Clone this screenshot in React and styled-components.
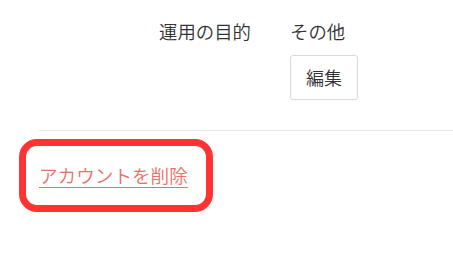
import React from "react";
import styled, { createGlobalStyle } from "styled-components";

const GlobalStyle = createGlobalStyle`
  body {
    margin: 0;
    background: #ffffff;
    font-family: "Noto Sans CJK JP", "Noto Sans", sans-serif;
    font-weight: 350;
    color: #333333;
  }
`;

export default function App() {
  return (
    <>
      <GlobalStyle />
      <Page>
        <InfoRow>
          <Label>運用の目的</Label>
          <Value>
            <span>その他</span>
            <EditButton type="button">編集</EditButton>
          </Value>
        </InfoRow>
        <Divider />
        <DangerZone>
          <Highlighted>
            <DeleteLink href="#">アカウントを削除</DeleteLink>
            <Annotation />
          </Highlighted>
        </DangerZone>
      </Page>
    </>
  );
}

const Page = styled.div`
  width: 453px;
  height: 255px;
  padding: 18px 0 0 39px;
  box-sizing: border-box;
  overflow: hidden;
`;

const InfoRow = styled.div`
  display: grid;
  grid-template-columns: 212px auto;
  column-gap: 39px;
  font-size: 18.4px;
  line-height: 27px;
`;

const Label = styled.div`
  text-align: right;
  color: #333333;
`;

const Value = styled.div`
  display: flex;
  flex-direction: column;
  align-items: flex-start;
  gap: 10px;
`;

const EditButton = styled.button`
  font-family: inherit;
  font-weight: 350;
  font-size: 18px;
  line-height: 27px;
  color: #333333;
  background: #ffffff;
  border: 1px solid #d9d9d9;
  border-radius: 3px;
  padding: 8px 15px;
  cursor: pointer;
`;

const Divider = styled.hr`
  margin: 30px 0 0;
  border: 0;
  border-top: 1px solid #e6e6e6;
  height: 0;
`;

const DangerZone = styled.div`
  padding-top: 30px;
`;

const Highlighted = styled.div`
  position: relative;
  display: inline-block;
`;

const DeleteLink = styled.a`
  font-size: 18.6px;
  line-height: 27px;
  color: #ec6e66;
  text-decoration: underline;
  text-underline-offset: 4px;
  text-decoration-thickness: 1px;
`;

const Annotation = styled.span`
  position: absolute;
  left: -20px;
  top: -22px;
  right: -25px;
  bottom: -24px;
  border: 7px solid #ff3333;
  border-radius: 18px;
  pointer-events: none;
`;
